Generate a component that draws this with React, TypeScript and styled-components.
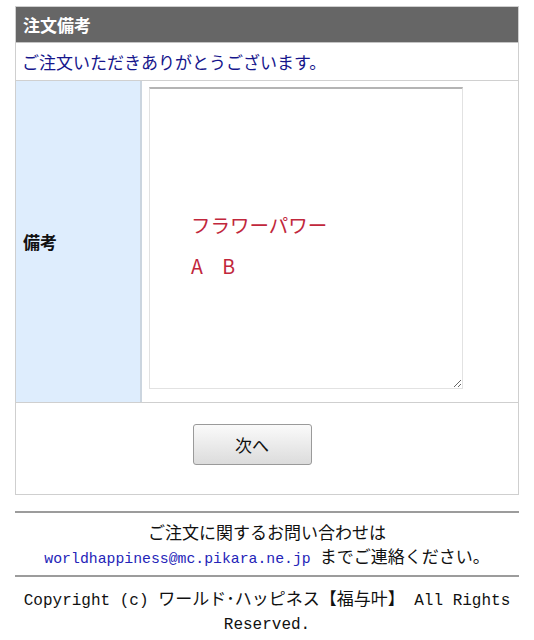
import React from 'react';
import styled, { createGlobalStyle } from 'styled-components';

const GlobalStyle = createGlobalStyle`
  body {
    margin: 0;
    background: #fff;
    font-family: "Noto Sans CJK JP", "Noto Sans", sans-serif;
    color: #111;
  }
`;

const Page = styled.div`
  padding: 6px 15px 0;
`;

const Panel = styled.div`
  border: 1px solid #cfcfcf;
`;

const Header = styled.div`
  background-color: #666666;
  color: #fff;
  font-weight: bold;
  font-size: 17px;
  line-height: 35px;
  padding: 0 7px;
  border-bottom: 1px solid #c4c4c4;
`;

const Thanks = styled.div`
  color: #16168c;
  font-size: 17px;
  line-height: 37px;
  padding: 0 6px;
  border-bottom: 1px solid #d0d0d0;
`;

const NoteRow = styled.div`
  display: grid;
  grid-template-columns: 126px 1fr;
  border-bottom: 1px solid #cfcfcf;
`;

const LabelCell = styled.div`
  background-color: #deedfd;
  border-right: 2px solid #cbd5df;
  display: flex;
  align-items: center;
  padding-left: 7px;
  font-weight: bold;
  font-size: 17px;
`;

const FieldCell = styled.div`
  padding: 6px 7px 13px;
`;

const Note = styled.textarea`
  display: block;
  box-sizing: border-box;
  width: 314px;
  height: 302px;
  margin: 0;
  padding: 115px 10px 0 41px;
  border: 1px solid #e2e2e2;
  border-top: 2px solid #b4b4b4;
  font-family: "Noto Sans CJK JP", sans-serif;
  font-size: 19.5px;
  line-height: 41px;
  color: #c1273c;
  background: #fff;
  outline: none;
`;

const ButtonRow = styled.div`
  display: flex;
  justify-content: center;
  padding: 21px 30px 29px 0;
`;

const NextButton = styled.button`
  width: 119px;
  height: 41px;
  border: 1px solid #9a9a9a;
  border-radius: 3px;
  background: linear-gradient(#fafafa, #dcdcdc);
  font-family: "Noto Sans CJK JP", sans-serif;
  font-size: 17px;
  color: #111;
  cursor: pointer;
`;

const Rule = styled.hr<{ $flush?: boolean }>`
  margin: ${(p) => (p.$flush ? '0' : '16px 0 0')};
  border: none;
  border-top: 2px solid #9c9c9c;
`;

const FooterText = styled.div<{ $tight?: boolean }>`
  text-align: center;
  font-size: 17px;
  line-height: 24px;
  padding: ${(p) => (p.$tight ? '9px 0 5px' : '7px 0 7px')};
`;

const Mono = styled.span<{ $link?: boolean; $size?: number }>`
  font-family: "Liberation Mono", "DejaVu Sans Mono", monospace;
  font-size: ${(p) => p.$size ?? 14.8}px;
  line-height: 1;
  color: ${(p) => (p.$link ? '#2424b8' : 'inherit')};
`;

const App: React.FC = () => {
  return (
    <Page>
      <GlobalStyle />
      <Panel>
        <Header>注文備考</Header>
        <Thanks>ご注文いただきありがとうございます。</Thanks>
        <NoteRow>
          <LabelCell>備考</LabelCell>
          <FieldCell>
            <Note defaultValue={'フラワーパワー\nA　B'} />
          </FieldCell>
        </NoteRow>
        <ButtonRow>
          <NextButton type="button">次へ</NextButton>
        </ButtonRow>
      </Panel>
      <Rule />
      <FooterText>
        ご注文に関するお問い合わせは
        <br />
        <Mono $link>worldhappiness@mc.pikara.ne.jp </Mono>までご連絡ください。
      </FooterText>
      <Rule $flush />
      <FooterText $tight>
        <Mono $size={16}>Copyright (c) </Mono>ワールド･ハッピネス【福与叶】<Mono $size={16}> All Rights Reserved.</Mono>
      </FooterText>
    </Page>
  );
};

export default App;
